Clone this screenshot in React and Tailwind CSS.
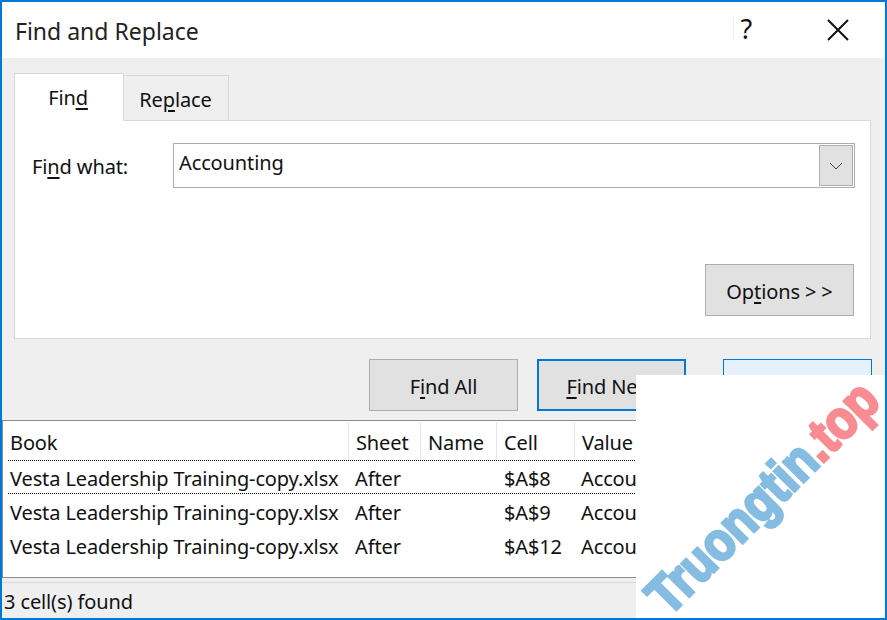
import React from 'react';

const rows = [
  { cell: '$A$8', focused: true },
  { cell: '$A$9' },
  { cell: '$A$12' },
];

const colClass = 'grid grid-cols-[346px_72px_76px_78px_1fr]';

// Access-key letter, underlined the way Windows draws it
function Key({ children }) {
  return <span className="underline decoration-[2px] underline-offset-[3px]">{children}</span>;
}

function DialogButton({ children, className = '' }) {
  return (
    <div className={`flex h-[52px] w-[149px] items-center justify-center bg-[#e1e1e1] pt-[3px] ${className}`}>
      <span className="whitespace-nowrap">{children}</span>
    </div>
  );
}

export default function App() {
  return (
    <div
      className="relative flex h-[620px] w-[887px] flex-col overflow-hidden border-2 border-[#0078d7] bg-[#efefef] text-[20px] tracking-[-0.12px] text-[#111]"
      style={{ fontFamily: '"Noto Sans", "Open Sans", sans-serif' }}
    >
      {/* Title bar */}
      <div className="flex h-[56px] shrink-0 items-center bg-white pl-[13px] pr-[36px] pt-[3px]">
        <span className="flex-1 text-[23px] tracking-normal text-[#222]">Find and Replace</span>
        <span className="mr-[75px] -mt-[6px] border-l border-[#eee] pl-[6px] text-[27px] leading-[22px]">?</span>
        <svg className="-mt-[4px]" width="22" height="22" viewBox="0 0 22 22" fill="none" stroke="#111" strokeWidth="2">
          <path d="M1 1 21 21M21 1 1 21" />
        </svg>
      </div>

      {/* Tabs */}
      <div className="flex h-[62px] shrink-0 items-end pl-[12px]">
        <div className="relative z-10 -mb-[1px] flex h-[48px] w-[110px] items-center justify-center border border-b-0 border-[#d9d9d9] bg-white pr-[2px] pt-[1px]">
          <span>Fin<Key>d</Key></span>
        </div>
        <div className="-ml-[1px] flex h-[45px] w-[106px] items-center justify-center border border-b-0 border-[#d9d9d9] pr-[1px] pt-[3px]">
          <span>Re<Key>p</Key>lace</span>
        </div>
      </div>

      {/* Find panel */}
      <div className="ml-[12px] flex h-[219px] w-[857px] shrink-0 flex-col border border-[#d9d9d9] bg-white pt-[22px]">
        <div className="flex items-center pl-[17px] pr-[15px]">
          <span className="w-[141px] pt-[2px]">Fi<Key>n</Key>d what:</span>
          <div className="flex h-[45px] flex-1 items-center justify-between border border-[#adadad] pl-[5px] pr-[1px]">
            <span className="-mt-[6px]">Accounting</span>
            <div className="flex h-[41px] w-[34px] items-center justify-center border border-[#adadad] bg-[#e1e1e1]">
              <svg width="14" height="8" viewBox="0 0 14 8" fill="none" stroke="#444" strokeWidth="1">
                <path d="M1 1 7 7 13 1" />
              </svg>
            </div>
          </div>
        </div>
        <div className="mt-[76px] flex justify-end pr-[16px]">
          <DialogButton className="border border-[#adadad]">
            Op<Key>t</Key>ions &gt; &gt;
          </DialogButton>
        </div>
      </div>

      {/* Action buttons */}
      <div className="flex h-[81px] shrink-0 items-start gap-[19px] pl-[367px] pt-[20px]">
        <DialogButton className="border border-[#adadad]">
          F<Key>i</Key>nd All
        </DialogButton>
        <DialogButton className="border-2 border-[#0078d7] pr-[2px]">
          <Key>F</Key>ind Next
        </DialogButton>
        <DialogButton className="ml-[18px] border border-[#0078d7] !bg-[#e5f1fb]">Close</DialogButton>
      </div>

      {/* Results list */}
      <div className="h-[158px] shrink-0 border-y border-l border-[#8c8c8c] bg-white">
        <div className={`${colClass} h-[39px] pt-[1px]`}>
          {['Book', 'Sheet', 'Name', 'Cell', 'Value'].map((col, i) => (
            <div key={col} className={`mb-[1px] flex items-center pl-[7px] pt-[4px] ${i < 4 ? 'border-r border-[#e5e5e5]' : ''}`}>
              {col}
            </div>
          ))}
        </div>
        {rows.map((row) => (
          <div
            key={row.cell}
            className={`${colClass} h-[34px] items-center border-y pt-[3px] ${row.focused ? 'ml-[5px] border-dotted border-black' : 'border-transparent'}`}
          >
            <span className={`whitespace-nowrap ${row.focused ? 'pl-[2px]' : 'pl-[7px]'}`}>Vesta Leadership Training-copy.xlsx</span>
            <span className={row.focused ? 'pl-[1px]' : 'pl-[6px]'}>After</span>
            <span />
            <span className={row.focused ? 'pl-[2px]' : 'pl-[7px]'}>{row.cell}</span>
            <span className={row.focused ? 'pl-[1px]' : 'pl-[6px]'}>Accounting</span>
          </div>
        ))}
      </div>

      {/* Status bar */}
      <div className="mt-[4px] flex flex-1 items-center border-t border-[#d9d9d9] pl-[2px] pt-[3px]">3 cell(s) found</div>

      {/* Site watermark pasted over the corner */}
      <div className="absolute bottom-0 right-[-2px] flex h-[243px] w-[251px] items-center justify-center overflow-hidden bg-white">
        <span
          className="shrink-0 -rotate-45 scale-x-[0.87] whitespace-nowrap text-[54px] font-bold leading-none tracking-normal text-[#85bce2] [-webkit-text-stroke:3px_#85bce2]"
          style={{ fontFamily: '"Liberation Sans", sans-serif' }}
        >
          Truongtin<span className="text-[#f98c92] [-webkit-text-stroke:3px_#f98c92]">.top</span>
        </span>
      </div>
    </div>
  );
}
